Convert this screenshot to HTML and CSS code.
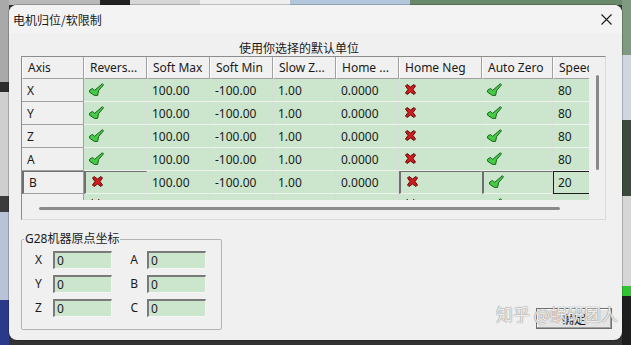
FILE: index.html
```html
<!DOCTYPE html>
<html lang="zh-CN">
<head>
  <meta charset="UTF-8" />
  <title>电机归位/软限制</title>
  <link rel="stylesheet" href="styles.css">
</head>
<body>
  <svg width="0" height="0" class="defs">
    <symbol id="ok" viewBox="0 0 15 13">
      <path d="M0.6 7.2 L3.6 5.4 L5.6 7.4 L13.4 0.7 L14.5 1.8 L9.6 7.6 L8.6 12.4 L5.4 12.4 L0.6 9.2 Z" fill="#44cc44" stroke="#1b5e1f" stroke-width="1" stroke-linejoin="round" />
    </symbol>
    <symbol id="no" viewBox="0 0 11 11">
      <path d="M0.5 2 L2 0.5 L5.5 3 L9 0.5 L10.5 2 L8 5.5 L10.5 9 L9 10.5 L5.5 8 L2 10.5 L0.5 9 L3 5.5 Z" fill="#d21c1c" stroke="#5a0c0c" stroke-width="1" stroke-linejoin="round" />
    </symbol>
  </svg>

  <div class="dialog">
    <div class="titlebar">
      <span class="title">电机归位/软限制</span>
      <svg class="close" width="11" height="11" viewBox="0 0 11 11">
        <path d="M0.5 0.5 L10.5 10.5 M10.5 0.5 L0.5 10.5" stroke="#1c1c1c" stroke-width="1.1" />
      </svg>
    </div>

    <div class="units">使用你选择的默认单位</div>

    <div class="grid">
      <div class="viewport">
        <div class="table">
          <div class="th">Axis</div>
          <div class="th">Revers...</div>
          <div class="th">Soft Max</div>
          <div class="th">Soft Min</div>
          <div class="th">Slow Z...</div>
          <div class="th">Home ...</div>
          <div class="th">Home Neg</div>
          <div class="th">Auto Zero</div>
          <div class="th">Speed %</div>

          <div class="axis">X</div>
          <div class="td"><svg class="ico"><use href="#ok" /></svg></div>
          <div class="td">100.00</div><div class="td">-100.00</div><div class="td">1.00</div><div class="td">0.0000</div>
          <div class="td"><svg class="ico x"><use href="#no" /></svg></div>
          <div class="td"><svg class="ico"><use href="#ok" /></svg></div>
          <div class="td">80</div>

          <div class="axis">Y</div>
          <div class="td"><svg class="ico"><use href="#ok" /></svg></div>
          <div class="td">100.00</div><div class="td">-100.00</div><div class="td">1.00</div><div class="td">0.0000</div>
          <div class="td"><svg class="ico x"><use href="#no" /></svg></div>
          <div class="td"><svg class="ico"><use href="#ok" /></svg></div>
          <div class="td">80</div>

          <div class="axis">Z</div>
          <div class="td"><svg class="ico"><use href="#ok" /></svg></div>
          <div class="td">100.00</div><div class="td">-100.00</div><div class="td">1.00</div><div class="td">0.0000</div>
          <div class="td"><svg class="ico x"><use href="#no" /></svg></div>
          <div class="td"><svg class="ico"><use href="#ok" /></svg></div>
          <div class="td">80</div>

          <div class="axis">A</div>
          <div class="td"><svg class="ico"><use href="#ok" /></svg></div>
          <div class="td">100.00</div><div class="td">-100.00</div><div class="td">1.00</div><div class="td">0.0000</div>
          <div class="td"><svg class="ico x"><use href="#no" /></svg></div>
          <div class="td"><svg class="ico"><use href="#ok" /></svg></div>
          <div class="td">80</div>

          <div class="axis sunken">B</div>
          <div class="td sunken"><svg class="ico x"><use href="#no" /></svg></div>
          <div class="td">100.00</div><div class="td">-100.00</div><div class="td">1.00</div><div class="td">0.0000</div>
          <div class="td sunken"><svg class="ico x"><use href="#no" /></svg></div>
          <div class="td sunken"><svg class="ico"><use href="#ok" /></svg></div>
          <div class="td edit">20</div>

          <div class="axis">C</div>
          <div class="td"><svg class="ico x"><use href="#no" /></svg></div>
          <div class="td">100.00</div><div class="td">-100.00</div><div class="td">1.00</div><div class="td">0.0000</div>
          <div class="td"><svg class="ico x"><use href="#no" /></svg></div>
          <div class="td"><svg class="ico"><use href="#ok" /></svg></div>
          <div class="td">20</div>
        </div>
      </div>
      <div class="vscroll"><div class="vthumb"></div></div>
      <div class="hscroll"><div class="hthumb"></div></div>
    </div>

    <div class="bottom">
      <fieldset class="g28">
        <legend>G28机器原点坐标</legend>
        <div class="coords">
          <span class="lbl">X</span><input type="text" value="0" />
          <span class="lbl right">A</span><input type="text" value="0" />
          <span class="lbl">Y</span><input type="text" value="0" />
          <span class="lbl right">B</span><input type="text" value="0" />
          <span class="lbl">Z</span><input type="text" value="0" />
          <span class="lbl right">C</span><input type="text" value="0" />
        </div>
      </fieldset>
      <button class="ok">确定</button>
    </div>

    <div class="watermark">知乎 @蜗研团人</div>
  </div>
</body>
</html>
```

FILE: styles.css
```css
body {
  margin: 0;
  height: 345px;
  box-sizing: border-box;
  padding: 5px 9px;
  font-family: "Noto Sans", "Noto Sans CJK SC", sans-serif;
  font-size: 12px;
  color: #1a1a1a;
  overflow: hidden;
  background:
    linear-gradient(to bottom, #a9a9a9 0 82px, #2c2c2c 82px 92px, #cfcfcf 92px 196px, #3c3c3c 196px 212px, #b9c2d6 212px 300px, #2a3a8a 300px) left top / 9px 100% no-repeat,
    linear-gradient(to bottom, #7f9a80 0 55px, #cfd6df 55px 120px, #3b4a3b 120px 196px, #d6d6d6 196px 286px, #31c431 286px 296px, #1e1e1e 296px) right top / 9px 100% no-repeat,
    linear-gradient(to right, #b8b8b8 0 100px, #222 100px 130px, #d6d6d6 130px 200px, #eeeeee 200px 290px, #b3c6dc 290px 410px, #6b896b 410px) left top / 100% 5px no-repeat,
    #333;
}

.defs {
  position: absolute;
}

.dialog {
  position: relative;
  height: 335px;
  background: #f0f0f0;
  border-radius: 8px;
  box-shadow: 0 0 0 1px rgba(0, 0, 0, 0.2);
  display: flex;
  flex-direction: column;
  overflow: hidden;
}

.titlebar {
  height: 28px;
  flex: none;
  display: flex;
  align-items: center;
  justify-content: space-between;
  padding: 0 10px 0 4px;
  background: #f3f3f3;
}

.title {
  font-family: "Noto Sans CJK SC", sans-serif;
  font-size: 12px;
}

.units {
  margin-top: 7px;
  height: 16px;
  line-height: 16px;
  padding-left: 230px;
  font-family: "Noto Sans CJK SC", sans-serif;
}

.grid {
  margin-left: 12px;
  width: 585px;
  height: 164px;
  flex: none;
  box-sizing: border-box;
  border: 1px solid;
  border-color: #8c8c8c #dadada #dadada #8c8c8c;
  display: grid;
  grid-template-columns: 567px 1fr;
  grid-template-rows: 143px 1fr;
  background: #f0f0f0;
}

.viewport {
  overflow: hidden;
}

.table {
  display: grid;
  grid-template-columns: 62px 63px 63px 63px 63px 63px 83px 71px 60px;
  grid-template-rows: 22px;
  grid-auto-rows: 23px;
}

.th, .td, .axis {
  box-sizing: border-box;
  padding: 0 5px;
  white-space: nowrap;
  overflow: hidden;
  display: flex;
  align-items: center;
}

.th {
  background: #f0f0f0;
  border-right: 1px solid #a0a0a0;
  border-bottom: 1px solid #a0a0a0;
  border-left: 1px solid #fff;
}

.axis {
  background: #f0f0f0;
  border-right: 1px solid #a0a0a0;
  border-bottom: 1px solid #a0a0a0;
}

.td {
  background: #cce6cd;
  border-right: 1px solid #d6dcd6;
  border-bottom: 1px solid #eef3ee;
}

.sunken {
  border-top: 1px solid #6f6f6f;
  border-left: 2px solid #6f6f6f;
}

.edit {
  border: 1px solid #1e1e1e;
  padding-left: 4px;
}

.ico {
  width: 15px;
  height: 13px;
  margin-top: -2px;
}

.ico.x {
  width: 11px;
  height: 11px;
  margin-left: 1px;
}

.vscroll {
  grid-row: 1;
  grid-column: 2;
}

.vthumb {
  margin: 18px 0 0 7px;
  width: 3px;
  height: 95px;
  border-radius: 2px;
  background: #8a8a8a;
}

.hscroll {
  grid-row: 2;
  grid-column: 1;
}

.hthumb {
  margin: 7px 0 0 17px;
  width: 521px;
  height: 3px;
  border-radius: 2px;
  background: #8a8a8a;
}

.bottom {
  display: flex;
  justify-content: space-between;
  align-items: flex-end;
  margin: 11px 10px 0 12px;
}

.g28 {
  margin: 0;
  width: 201px;
  height: 99px;
  box-sizing: border-box;
  padding: 4px 0 12px 13px;
  border: 1px solid #b4b4b4;
  border-radius: 2px;
}

.g28 legend {
  margin-left: -11px;
  padding: 0 1px;
  line-height: 16px;
  font-family: "Noto Sans", "Noto Sans CJK SC", sans-serif;
  font-size: 12px;
}

.coords {
  display: grid;
  grid-template-columns: 18px 59px 35px 59px;
  grid-auto-rows: 18px;
  row-gap: 6px;
  align-items: center;
}

.lbl {
  line-height: 18px;
}

.lbl.right {
  text-align: right;
  padding-right: 9px;
}

.coords input {
  width: 59px;
  height: 18px;
  box-sizing: border-box;
  margin: 0;
  padding: 0 2px;
  font-family: "Noto Sans", sans-serif;
  font-size: 12px;
  color: #1a1a1a;
  background: #cce6cd;
  border: 1px solid;
  border-color: #7a7a7a #f4f4f4 #f4f4f4 #7a7a7a;
  border-left-width: 2px;
  border-top-width: 2px;
}

.ok {
  width: 76px;
  height: 21px;
  margin-bottom: 1px;
  font-family: "Noto Sans CJK SC", sans-serif;
  font-size: 12px;
  color: #111;
  background: #e4e4e4;
  border: 1px solid #6e6e6e;
  box-shadow: inset -1px -1px #a0a0a0, inset 1px 1px #fff;
}

.watermark {
  position: absolute;
  left: 487px;
  top: 296px;
  font-family: "Noto Sans CJK SC", sans-serif;
  font-size: 17px;
  color: rgba(255, 255, 255, 0.85);
  text-shadow: 0 0 1px #8a8a8a, 0 0 1px #8a8a8a;
  white-space: nowrap;
  pointer-events: none;
}
```
